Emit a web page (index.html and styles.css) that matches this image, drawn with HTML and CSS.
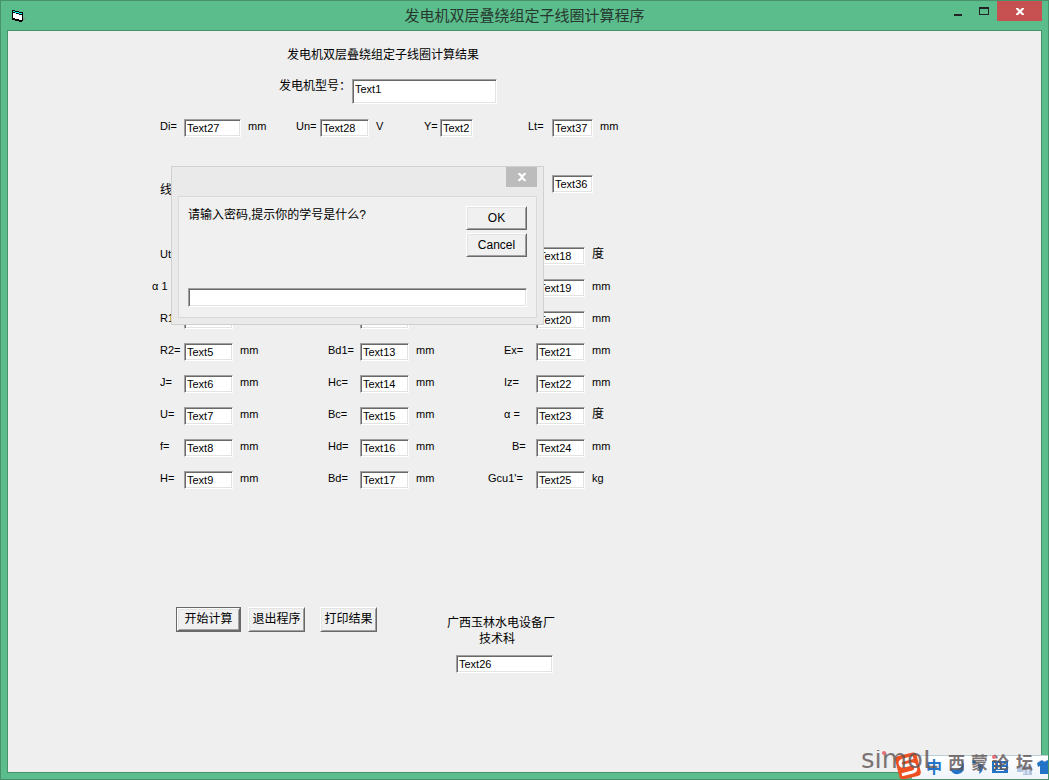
FILE: index.html
```
<!DOCTYPE html>
<html lang="zh-CN">
<head>
<meta charset="utf-8">
<title>发电机双层叠绕组定子线圈计算程序</title>
<link rel="stylesheet" href="styles.css">
</head>
<body>
<div class="window">
  <header class="titlebar">
    <svg class="app-icon" width="14" height="12" viewBox="0 0 14 12" shape-rendering="crispEdges">
      <path d="M0 0h3v1h4v1h4v9h-1v1h-3v-1h-4v-1h-3z" fill="#000"/>
      <path d="M1 1h2v1h4v1h3v1h-3v-1h-4v-1h-2z" fill="#0ff"/>
      <path d="M1 3h3v1h3v1h3v5h-3v-1h-4v-1h-2z" fill="#fff"/>
      <path d="M11 8h2v1h-1v1h-1z" fill="#808080"/>
    </svg>
    <h1 class="window-title">发电机双层叠绕组定子线圈计算程序</h1>
    <div class="controls">
      <button class="control" aria-label="最小化"><svg width="10" height="16"><path d="M1 13h8v2H1z" fill="#222"/></svg></button>
      <button class="control" aria-label="最大化"><svg width="10" height="16"><path d="M0 6h10v8H0zM1 8v5h8V8z" fill="#222" fill-rule="evenodd"/></svg></button>
      <button class="close" aria-label="关闭"><svg width="8" height="7"><path d="M0 0h2l2 2 2-2h2v1L5.500 3.500 8 6v1H6L4 5 2 7H0V6l2.500-2.500L0 1z" fill="#fff"/></svg></button>
    </div>
  </header>
  <main class="client">
    <form class="form">
      <h2 class="heading">发电机双层叠绕组定子线圈计算结果</h2>
      <div class="model"><label for="t1">发电机型号：</label><input class="field model-field" id="t1" value="Text1"></div>
      <div class="ratings">
        <label for="t27">Di=</label><input class="field w57" id="t27" value="Text27"><span>mm</span>
        <label for="t28">Un=</label><input class="field w49" id="t28" value="Text28"><span>V</span>
        <label for="t2">Y=</label><input class="field w33" id="t2" value="Text2">
        <label for="t37">Lt=</label><input class="field w41" id="t37" value="Text37"><span>mm</span>
      </div>
      <div class="coil"><label for="t36">线</label><input class="field w41" id="t36" value="Text36"></div>
      <div class="results">
        <div class="row"><label class="a" for="t3">Ut</label><input class="field x" id="t3"><input class="field z" id="t18" aria-label="Text18" value="Text18"><span class="zu degree">度</span></div>
        <div class="row"><span class="a alpha">α 1</span><input class="field z" id="t19" aria-label="Text19" value="Text19"><span class="zu">mm</span></div>
        <div class="row"><label class="a" for="t4">R1</label><input class="field x" id="t4"><input class="field y" id="t12" aria-label="Text12"><input class="field z" id="t20" aria-label="Text20" value="Text20"><span class="zu">mm</span></div>
        <div class="row"><label class="a" for="t5">R2=</label><input class="field x" id="t5" value="Text5"><span class="xu">mm</span><label class="b" for="t13">Bd1=</label><input class="field y" id="t13" value="Text13"><span class="yu">mm</span><label class="c" for="t21">Ex=</label><input class="field z" id="t21" value="Text21"><span class="zu">mm</span></div>
        <div class="row"><label class="a" for="t6">J=</label><input class="field x" id="t6" value="Text6"><span class="xu">mm</span><label class="b" for="t14">Hc=</label><input class="field y" id="t14" value="Text14"><span class="yu">mm</span><label class="c" for="t22">Iz=</label><input class="field z" id="t22" value="Text22"><span class="zu">mm</span></div>
        <div class="row"><label class="a" for="t7">U=</label><input class="field x" id="t7" value="Text7"><span class="xu">mm</span><label class="b" for="t15">Bc=</label><input class="field y" id="t15" value="Text15"><span class="yu">mm</span><label class="c" for="t23">α =</label><input class="field z" id="t23" value="Text23"><span class="zu degree">度</span></div>
        <div class="row"><label class="a" for="t8">f=</label><input class="field x" id="t8" value="Text8"><span class="xu">mm</span><label class="b" for="t16">Hd=</label><input class="field y" id="t16" value="Text16"><span class="yu">mm</span><label class="c near" for="t24">B=</label><input class="field z" id="t24" value="Text24"><span class="zu">mm</span></div>
        <div class="row"><label class="a" for="t9">H=</label><input class="field x" id="t9" value="Text9"><span class="xu">mm</span><label class="b" for="t17">Bd=</label><input class="field y" id="t17" value="Text17"><span class="yu">mm</span><label class="c far" for="t25">Gcu1'=</label><input class="field z" id="t25" value="Text25"><span class="zu">kg</span></div>
      </div>
      <div class="footer">
        <div class="actions">
          <button type="button" class="button default">开始计算</button>
          <button type="button" class="button">退出程序</button>
          <button type="button" class="button last">打印结果</button>
        </div>
        <div class="company">
          <label for="t26"><span class="line">广西玉林水电设备厂</span><span class="line dept">技术科</span></label>
          <input class="field w97" id="t26" value="Text26">
        </div>
      </div>
    </form>
    <section class="dialog" role="dialog" aria-label="输入密码">
      <div class="dialog-bar"><button class="dialog-close" aria-label="关闭"><svg width="8" height="8"><path d="M0 0h2l2 2 2-2h2v1L5 4l3 3v1H6L4 6 2 8H0V7l3-3-3-3z" fill="#fff"/></svg></button></div>
      <div class="dialog-body">
        <div class="prompt">
          <label for="pw">请输入密码,提示你的学号是什么?</label>
          <div class="dialog-buttons"><button class="button wide">OK</button><button class="button wide">Cancel</button></div>
        </div>
        <input class="field answer" id="pw">
      </div>
    </section>
  </main>
  <div class="ime">
    <svg width="187" height="30" viewBox="0 0 187 30">
      <defs><linearGradient id="bar" x1="0" y1="0" x2="0" y2="1"><stop offset="0" stop-color="#fff"/><stop offset="1" stop-color="#eef4fb"/></linearGradient></defs>
      <path d="M50 5h137v25H50z" fill="url(#bar)"/>
      <path d="M50 5.500h137" stroke="#b9cfd8"/>
      <g transform="rotate(-14 46 16)">
        <rect x="35" y="4" width="22" height="24" rx="4" fill="#ef5021"/>
        <path d="M53 9H43q-4 0-4 3t4 3h7q3 0 3 4t-4 4H38" fill="none" stroke="#fff" stroke-width="3"/>
      </g>
      <g fill="#2374c6">
        <text class="mode" x="64" y="23">中</text>
        <path d="M99 10q3 7-3 9-4 2-8-1 2 7 8 6 6-1 6-8 0-4-3-6z"/>
        <path d="M114 12a2 2 0 1 1-4 0 2 2 0 0 1 4 0zM117 14q4-1 4 3 0 5-4 7 1-3 0-5-2-3 0-5z"/>
        <path d="M130 11h16v12h-16zM132 13v2h2v-2zM136 13v2h2v-2zM140 13v2h4v-2zM132 17v2h2v-2zM136 17v2h2v-2zM140 17v2h4v-2zM134 20v1h8v-1z" fill-rule="evenodd"/>
        <path d="M155 21q0-5 4-5h8q3 0 3 3v6h-9v-3h-6z" fill="#b3c4df"/>
        <path d="M162 19v5m4-5v5" stroke="#fff"/>
        <path d="M175 13l5-3q3 3 5 0l2 1v13h-9v-8l-2 1z"/>
      </g>
      <g class="watermark">
        <text class="brand" x="-1" y="18">simoL</text>
        <text class="forum" y="19"><tspan x="86">西</tspan><tspan x="109">蒙</tspan><tspan x="130">论</tspan><tspan x="154">坛</tspan></text>
        <circle cx="22" cy="3" r="2" fill="#e84f57"/>
        <circle cx="132" cy="7" r="2" fill="#e84f57"/>
      </g>
    </svg>
  </div>
</div>
</body>
</html>
```
FILE: styles.css
```
* { box-sizing: border-box; }
body {
  margin: 0;
  font: 11px/15px "Liberation Sans", "Noto Sans CJK SC", sans-serif;
  color: #000;
}
button, input { font: inherit; color: inherit; margin: 0; }
svg { display: block; }

.window {
  position: relative;
  display: flex;
  flex-direction: column;
  min-height: 100vh;
  padding: 0 6px 6px;
  background: #5bbd8b;
  border: 1px solid #48926b;
  overflow: hidden;
}
.titlebar {
  display: grid;
  grid-template-columns: 1fr auto 1fr;
  height: 29px;
  align-items: start;
}
.app-icon { margin: 9px 0 0 5px; }
.window-title {
  margin: 3px 0 0;
  font: 15px/22px "Noto Sans CJK SC", sans-serif;
  color: #26382f;
}
.controls { display: flex; justify-content: flex-end; }
.control {
  width: 26px;
  height: 20px;
  padding: 0 8px 6px;
  border: 0;
  background: none;
}
.close, .dialog-close {
  display: grid;
  place-items: center;
  padding: 0;
  border: 0;
}
.close { width: 45px; height: 20px; background: #c75050; }

.client {
  position: relative;
  flex: 1;
  border: 1px solid #48926b;
  background: #efefef;
}
.form { padding: 15px 0 0 144px; }
.heading {
  margin: 0 0 17px 135px;
  font: 12px/16px "Noto Sans CJK SC", sans-serif;
}
.field {
  width: 49px;
  height: 18px;
  padding: 0 2px;
  background: #fff;
  border: 1px solid;
  border-color: #a0a0a0 #fff #fff #a0a0a0;
  border-radius: 0;
  box-shadow: inset 1px 1px #696969, inset -1px -1px #e3e3e3;
  outline: 0;
}
.w33 { width: 33px; }
.w41 { width: 41px; }
.w57 { width: 57px; }
.w97 { width: 97px; }

.model {
  display: grid;
  grid-template-columns: 73px auto;
  justify-content: start;
  margin-left: 127px;
  font-size: 12px;
}
.model-field { width: 145px; height: 25px; padding-bottom: 5px; font-size: 11px; }
.ratings {
  display: grid;
  grid-template-columns: 24px 64px 48px 24px 56px 48px 16px 88px 24px 48px 24px;
  margin: 15px 0 0 8px;
}
.coil {
  display: grid;
  grid-template-columns: 392px 48px;
  margin: 38px 0 0 8px;
  font-size: 12px;
}
.coil label { margin-top: 8px; }
.coil .field { font-size: 11px; }

.results { display: grid; gap: 14px; margin-top: 49px; }
.row {
  display: grid;
  grid-template-columns: 32px 56px 88px 32px 56px 72px 48px 56px 24px;
  height: 18px;
}
.row > * { grid-row: 1; }
.a { grid-column: 1; padding-left: 8px; }
.x { grid-column: 2; }
.xu { grid-column: 3; }
.b { grid-column: 4; }
.y { grid-column: 5; }
.yu { grid-column: 6; }
.c { grid-column: 7; padding-left: 16px; }
.z { grid-column: 8; }
.zu { grid-column: 9; }
.degree, .company { font-size: 12px; }
.near { padding-left: 24px; }
.far, .alpha { padding-left: 0; white-space: nowrap; }

.footer {
  display: flex;
  gap: 63px;
  margin: 118px 0 24px 24px;
  align-items: flex-start;
}
.actions { display: flex; gap: 7px; }
.button {
  width: 57px;
  height: 25px;
  padding: 0;
  border: 1px solid;
  border-color: #fff #696969 #696969 #fff;
  background: #f0f0f0;
  box-shadow: inset 1px 1px #e3e3e3, inset -1px -1px #a0a0a0;
  font-size: 12px;
  line-height: 15px;
}
.default { width: 65px; outline: 1px solid #696969; outline-offset: -1px; border-width: 2px; }
.last { margin-left: 8px; }
.company { padding-top: 8px; }
.line { display: block; width: 122px; line-height: 16px; text-align: center; }
.dept { padding-right: 8px; }
.company .field { margin: 8px 0 0 16px; font-size: 11px; }

.dialog {
  position: absolute;
  left: 163px;
  top: 135px;
  width: 373px;
  padding: 0 6px 6px;
  border: 1px solid #d0d0d0;
  background: #eaeaea;
}
.dialog-bar { display: flex; justify-content: flex-end; height: 29px; }
.dialog-close { width: 31px; height: 20px; background: #bcbcbc; }
.dialog-body {
  padding: 9px 9px 10px;
  border: 1px solid #d9d9d9;
  background: #f0f0f0;
}
.prompt { display: flex; justify-content: space-between; font-size: 12px; }
.prompt label { line-height: 18px; }
.dialog-buttons { display: grid; gap: 3px; margin-bottom: 31px; }
.wide { width: 61px; height: 24px; }
.answer { display: block; width: 100%; height: 19px; }

.ime {
  position: absolute;
  right: -1px;
  bottom: -1px;
}
.watermark { fill: #5f5555; opacity: 0.8; }
.brand { font: 26px "DejaVu Sans", sans-serif; }
.forum { font: bold 17px "Noto Sans CJK SC", sans-serif; }
.mode { font: bold 16px "Noto Sans CJK SC", sans-serif; }
```
